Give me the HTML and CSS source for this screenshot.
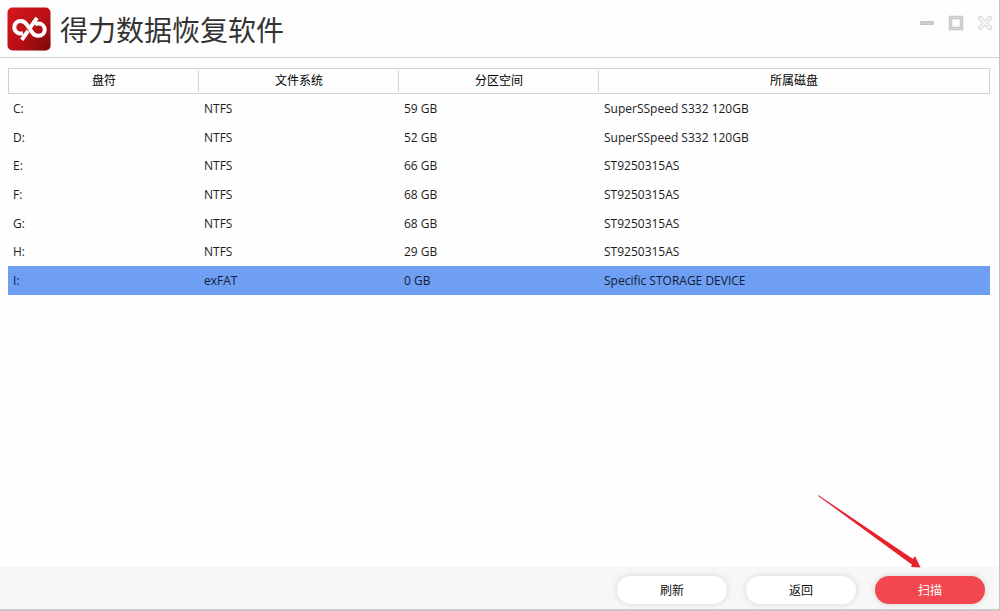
FILE: index.html
```html
<!DOCTYPE html>
<html lang="zh-CN">
<head>
<meta charset="utf-8">
<title>得力数据恢复软件</title>
<link rel="stylesheet" href="styles.css">
</head>
<body>
<div class="window">
  <header class="titlebar">
    <svg class="logo" viewBox="0 0 44 44" aria-hidden="true">
      <defs>
        <linearGradient id="logo-red" x1="0" y1="0" x2="1" y2="1">
          <stop offset="0" stop-color="#d4181e"/>
          <stop offset=".5" stop-color="#be1016"/>
          <stop offset="1" stop-color="#8a090c"/>
        </linearGradient>
      </defs>
      <rect x=".5" y=".5" width="43" height="43" rx="5" fill="url(#logo-red)"/>
      <path d="M27 29 39 27 43.500 31V38.500Q43.500 43.500 39 43.500H27L16 33Z" fill="#7d0a0c" opacity=".3"/>
      <g fill="none" stroke="#fff" stroke-width="4">
        <path d="M16 26.300C11.300 27.500 7.300 24.500 7.300 20.300C7.300 16.700 10.200 14 13.600 14C16.500 14 18.200 15.300 19.800 17.600L25.600 25.800C27 27.800 28.900 28.800 31.300 28.800C35 28.800 37.700 26.300 37.700 22.800C37.700 19.300 35 16.500 31.500 16.500C30.400 16.500 29.200 16.700 28 17.300"/>
        <path d="M30 10.800 22.800 21.200M21 23.800 14.800 32.800"/>
      </g>
    </svg>
    <h1 class="title">得力数据恢复软件</h1>
    <div class="controls">
      <button class="control" type="button" aria-label="最小化">
        <svg viewBox="0 0 16 16"><path d="M1 8H15" stroke="#c6c6c6" stroke-width="4"/><path d="M2 8H14" stroke="#d6d6d6" stroke-width="1"/></svg>
      </button>
      <button class="control" type="button" aria-label="最大化">
        <svg viewBox="0 0 16 16"><path d="M2.500 2.500H13.500V13.500H2.500Z" fill="none" stroke="#c8c8c8" stroke-width="3.600"/><path d="M2.500 2.500H13.500V13.500H2.500Z" fill="none" stroke="#d8d8d8" stroke-width="1"/></svg>
      </button>
      <button class="control" type="button" aria-label="关闭">
        <svg viewBox="0 0 16 16"><path d="M3 3 13 13M13 3 3 13" stroke="#d3d8dc" stroke-width="4.200" stroke-linecap="round"/><path d="M3 3 13 13M13 3 3 13" stroke="#f7f8f9" stroke-width="2" stroke-linecap="round"/></svg>
      </button>
    </div>
  </header>

  <main class="content">
    <table class="drives">
      <thead>
        <tr><th class="col-drive">盘符</th><th class="col-mid">文件系统</th><th class="col-mid">分区空间</th><th>所属磁盘</th></tr>
      </thead>
      <tbody>
        <tr><td>C:</td><td>NTFS</td><td>59 GB</td><td>SuperSSpeed S332 120GB</td></tr>
        <tr><td>D:</td><td>NTFS</td><td>52 GB</td><td>SuperSSpeed S332 120GB</td></tr>
        <tr><td>E:</td><td>NTFS</td><td>66 GB</td><td>ST9250315AS</td></tr>
        <tr><td>F:</td><td>NTFS</td><td>68 GB</td><td>ST9250315AS</td></tr>
        <tr><td>G:</td><td>NTFS</td><td>68 GB</td><td>ST9250315AS</td></tr>
        <tr><td>H:</td><td>NTFS</td><td>29 GB</td><td>ST9250315AS</td></tr>
        <tr class="selected"><td>I:</td><td>exFAT</td><td>0 GB</td><td>Specific STORAGE DEVICE</td></tr>
      </tbody>
    </table>
  </main>

  <footer class="actions">
    <button class="action" type="button">刷新</button>
    <button class="action" type="button">返回</button>
    <div class="scan">
      <button class="action primary" type="button">扫描</button>
      <svg class="arrow" viewBox="0 0 104 74" aria-hidden="true">
        <path d="M.500 .500 2 .500 96 64 98 61 103.500 72.500 94 72 95 69.500 92 67.500Z" fill="#e8202a"/>
      </svg>
    </div>
  </footer>
</div>
</body>
</html>
```
FILE: styles.css
```css
* {
  box-sizing: border-box;
}

body {
  margin: 0;
  background: #fefefe;
  color: #1c1c1c;
  font-family: "Open Sans", "Noto Sans CJK SC", sans-serif;
  font-size: 12px;
}

button {
  border: 0;
  font: inherit;
  cursor: pointer;
}

.window {
  display: flex;
  flex-direction: column;
  min-height: 100vh;
  border-right: 1px solid #c4c4c4;
  border-bottom: 2px solid #cacaca;
}

.titlebar {
  display: flex;
  align-items: center;
  gap: 9px;
  height: 58px;
  padding: 0 6px 0 7px;
  border-bottom: 1px solid #cfcfcf;
}

.logo {
  width: 44px;
  height: 44px;
}

.title {
  margin: 0;
  color: #333;
  font-family: "Noto Sans CJK SC", sans-serif;
  font-size: 28px;
  font-weight: 400;
  line-height: 44px;
}

.controls {
  display: flex;
  gap: 13px;
  margin: 0 0 12px auto;
}

.control {
  width: 16px;
  height: 16px;
  padding: 0;
  background: none;
}

.control svg {
  display: block;
}

.content {
  flex: 1;
  padding: 10px 9px 10px 8px;
}

.drives {
  width: 100%;
  border-collapse: separate;
  border-spacing: 0;
  table-layout: fixed;
  line-height: 18px;
}

.drives th {
  height: 26px;
  padding: 0;
  border: solid #d2d2d2;
  border-width: 1px 0;
  background: linear-gradient(#d2d2d2, #d2d2d2) right center / 1px 22px no-repeat;
  color: #000;
  font-weight: 400;
}

.drives th:first-child {
  border-left-width: 1px;
}

.drives th:last-child {
  border-right-width: 1px;
  background: none;
}

.col-drive {
  width: 191px;
}

.col-mid {
  width: 200px;
}

.drives td {
  height: 29px;
  padding: 0 5px;
}

.drives tr:nth-child(3n) td {
  height: 28px;
}

.selected td {
  background: #6f9ff2;
  color: #101c38;
}

.actions {
  display: flex;
  justify-content: flex-end;
  gap: 19px;
  padding: 9px 14px 5px;
  background: #f7f7f7;
}

.action {
  width: 110px;
  height: 28px;
  padding: 2px 0 0;
  border-radius: 14px;
  background: #fff;
  box-shadow: 0 0 7px rgba(0, 0, 0, .14);
  color: #111;
  line-height: 26px;
}

.primary {
  background: #f2474e;
  color: #fff;
}

.scan {
  position: relative;
}

.arrow {
  position: absolute;
  right: 64px;
  bottom: 35px;
  width: 104px;
  height: 74px;
  pointer-events: none;
}
```
